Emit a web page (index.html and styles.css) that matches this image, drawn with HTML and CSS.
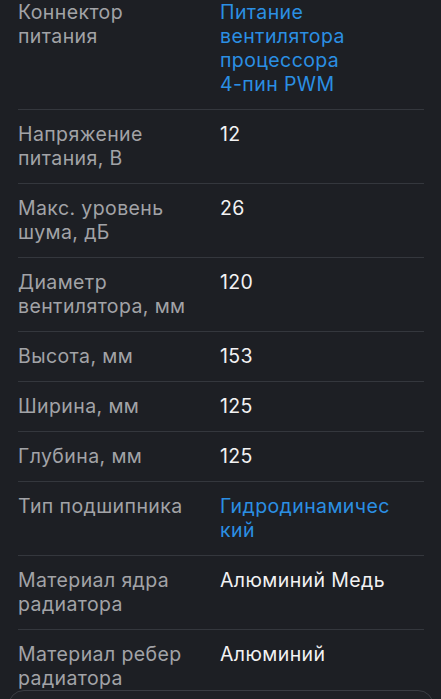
FILE: index.html
```html
<!DOCTYPE html>
<html lang="ru">
<head>
<meta charset="utf-8">
<link rel="stylesheet" href="styles.css">
</head>
<body>
<div class="page">
  <dl class="specs">
    <div class="row"><dt>Коннектор питания</dt><dd class="link">Питание вентилятора процессора <span class="nowrap">4-пин</span> PWM</dd></div>
    <div class="row"><dt>Напряжение питания, В</dt><dd>12</dd></div>
    <div class="row"><dt>Макс. уровень шума, дБ</dt><dd>26</dd></div>
    <div class="row"><dt>Диаметр вентилятора, мм</dt><dd>120</dd></div>
    <div class="row"><dt>Высота, мм</dt><dd>153</dd></div>
    <div class="row"><dt>Ширина, мм</dt><dd>125</dd></div>
    <div class="row"><dt>Глубина, мм</dt><dd>125</dd></div>
    <div class="row"><dt>Тип подшипника</dt><dd class="link">Гидродинамический</dd></div>
    <div class="row"><dt>Материал ядра радиатора</dt><dd>Алюминий Медь</dd></div>
    <div class="row last"><dt>Материал ребер радиатора</dt><dd>Алюминий</dd></div>
  </dl>
  <div class="panel"></div>
</div>
</body>
</html>
```
FILE: styles.css
```css
html, body {
  margin: 0;
  background: #1d1f24;
}
.page {
  font-family: Inter, "Noto Sans", sans-serif;
  font-size: 19.5px;
  letter-spacing: 0.4px;
  line-height: 24px;
  overflow: hidden;
  height: 699px;
}
.specs {
  margin: -12px 17px 0 18px;
  padding: 0;
}
.row {
  display: grid;
  grid-template-columns: 202px 178px;
  padding: 12px 0 13px;
  border-bottom: 1px solid #34373d;
}
.row.last {
  border-bottom: none;
  padding-bottom: 0;
}
dt {
  color: #a2a3a7;
  margin: 0;
  padding-right: 14px;
}
dd {
  color: #f2f2f3;
  margin: 0;
  overflow-wrap: anywhere;
}
dd.link {
  color: #2b8fe3;
}
.nowrap {
  white-space: nowrap;
}
.panel {
  margin: 0 7px 0 8px;
  height: 60px;
  border: 1px solid #3a3d43;
  border-radius: 16px;
  background: #1f2126;
}
```
